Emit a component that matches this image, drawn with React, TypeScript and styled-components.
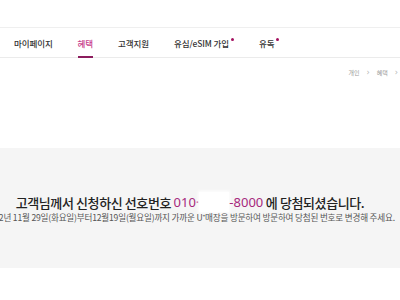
import React from "react";
import styled, { createGlobalStyle } from "styled-components";

const Global = createGlobalStyle`
  html, body { margin: 0; padding: 0; background: #fff; }
  body { font-family: "Noto Sans CJK KR", "Noto Sans", sans-serif; color: #222; width: 400px; height: 300px; overflow: hidden; }
`;

const Page = styled.div`
  display: flex;
  flex-direction: column;
  width: 400px;
  padding-top: 27px;
`;

const Nav = styled.nav`
  display: flex;
  align-items: stretch;
  gap: 25px;
  height: 29px;
  padding-left: 14px;
  border-top: 1px solid #efefef;
  border-bottom: 1px solid #ebebeb;
`;

const NavItem = styled.div<{ $active?: boolean }>`
  display: flex;
  align-items: center;
  font-size: 8.5px;
  font-weight: 500;
  letter-spacing: -0.1px;
  color: ${(p) => (p.$active ? "#c8408c" : "#333")};
  border-bottom: 2px solid ${(p) => (p.$active ? "#8c1d5e" : "transparent")};
  margin-bottom: -1px;
  padding-top: 1px;
`;

const Dot = styled.span`
  display: inline-block;
  width: 3px;
  height: 3px;
  border-radius: 50%;
  background: #a3105f;
  margin-left: 2px;
  align-self: flex-start;
  margin-top: 9px;
`;

const Crumbs = styled.div`
  display: flex;
  justify-content: flex-end;
  align-items: center;
  gap: 7px;
  height: 13px;
  margin-top: 8px;
  padding-right: 2px;
  font-size: 6px;
  color: #9a9a9a;
`;

const Sep = styled.span`
  font-size: 8px;
  color: #b5b5b5;
  font-family: "DejaVu Sans", sans-serif;
`;

const Panel = styled.section`
  margin-top: 69px;
  height: 120px;
  background: #f5f5f5;
  display: flex;
  flex-direction: column;
  justify-content: center;
  padding-right: 20px;
  overflow: hidden;
`;

const Line = styled.div`
  display: flex;
  justify-content: center;
  white-space: nowrap;
`;

const Title = styled(Line)`
  font-size: 13px;
  font-weight: 500;
  letter-spacing: -0.4px;
  color: #222;
  align-items: center;
  height: 18px;
  margin-top: 1px;
`;

const Pink = styled.span`
  color: #a6287c;
  font-family: "Noto Sans", sans-serif;
  font-weight: 400;
  letter-spacing: 0;
`;

const Mask = styled.span`
  display: inline-block;
  width: 30px;
  height: 20px;
  background: #fff;
  box-shadow: 0 0 3px 1px #fff;
`;

const Sub = styled(Line)`
  font-size: 8.6px;
  letter-spacing: -0.2px;
  color: #555;
  margin-top: 0;
`;

export default function App() {
  return (
    <>
      <Global />
      <Page>
        <Nav>
          <NavItem>마이페이지</NavItem>
          <NavItem $active>혜택</NavItem>
          <NavItem>고객지원</NavItem>
          <NavItem>
            유심/eSIM 가입<Dot />
          </NavItem>
          <NavItem>
            유독<Dot />
          </NavItem>
        </Nav>
        <Crumbs>
          <span>개인</span>
          <Sep>›</Sep>
          <span>혜택</span>
          <Sep>›</Sep>
        </Crumbs>
        <Panel>
          <Title>
            <span>고객님께서 신청하신 선호번호&nbsp;</span>
            <Pink>010·</Pink>
            <Mask />
            <Pink>-8000</Pink>
            <span>&nbsp;에 당첨되셨습니다.</span>
          </Title>
          <Sub>
            2022년 11월 29일(화요일)부터12월19일(월요일)까지 가까운 U⁺매장을 방문하여 방문하여 당첨된 번호로 변경해 주세요.
          </Sub>
        </Panel>
      </Page>
    </>
  );
}
